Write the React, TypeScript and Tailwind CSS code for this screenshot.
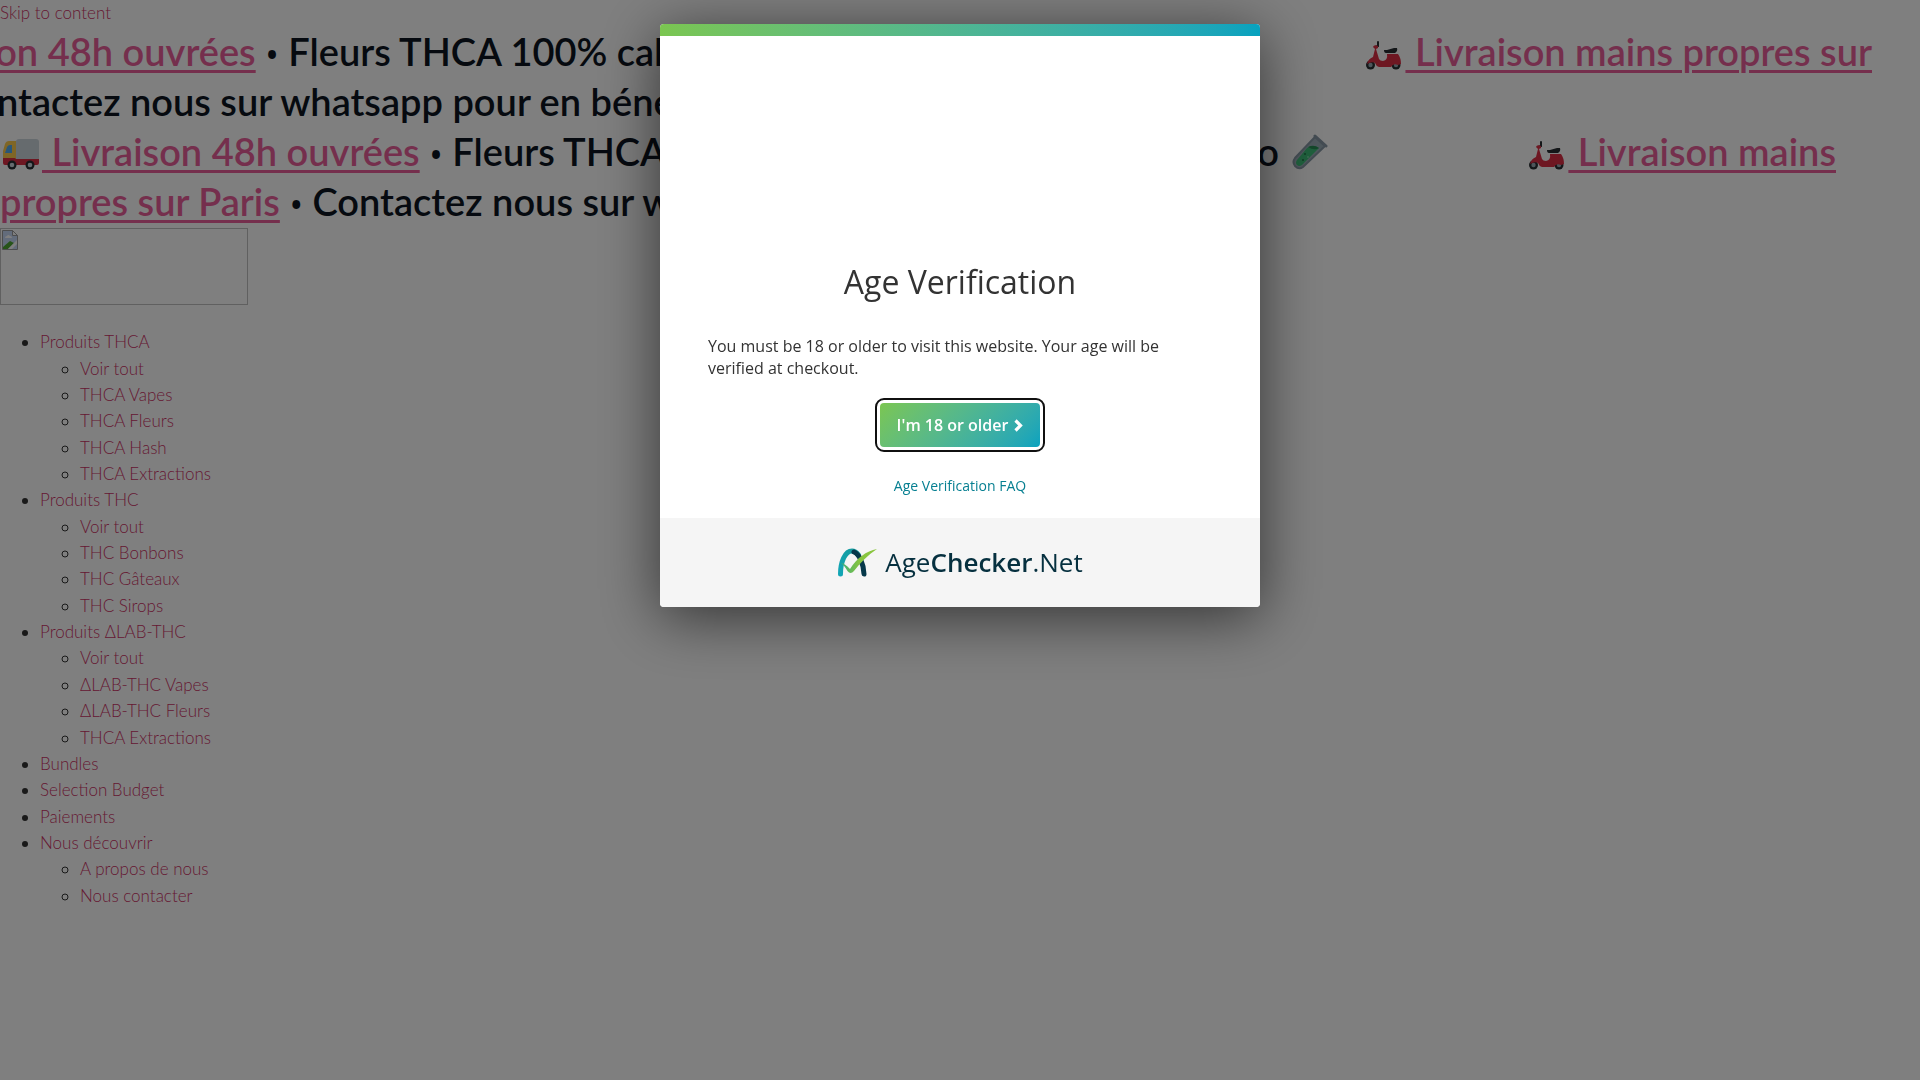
import React from 'react';

interface NavItem {
  label: string;
  children?: string[];
}

const navItems: NavItem[] = [
  {
    label: 'Produits THCA',
    children: ['Voir tout', 'THCA Vapes', 'THCA Fleurs', 'THCA Hash', 'THCA Extractions'],
  },
  {
    label: 'Produits THC',
    children: ['Voir tout', 'THC Bonbons', 'THC Gâteaux', 'THC Sirops'],
  },
  {
    label: 'Produits ΔLAB-THC',
    children: ['Voir tout', 'ΔLAB-THC Vapes', 'ΔLAB-THC Fleurs', 'THCA Extractions'],
  },
  { label: 'Bundles' },
  { label: 'Selection Budget' },
  { label: 'Paiements' },
  { label: 'Nous découvrir', children: ['A propos de nous', 'Nous contacter'] },
];

const Truck = () => (
  <svg className="inline-block align-[-4px]" width="42" height="36" viewBox="0 0 42 36">
    <path d="M16 8q0-3 3-3h17q3 0 3 3v18H16z" fill="#ccd6dd" />
    <path d="M3 27V17l2-7q1-3 4-3h7v20z" fill="#ffcc4d" />
    <path d="M5 19l2-6q1-2 3-2h2v8z" fill="#55acee" />
    <path d="M3 24h12l1 1h23v4q0 2-2 2H5q-2 0-2-2z" fill="#dd2e44" />
    <circle cx="12" cy="31" r="4.500" fill="#292f33" />
    <circle cx="12" cy="31" r="2.300" fill="#ccd6dd" />
    <circle cx="30" cy="31" r="4.500" fill="#292f33" />
    <circle cx="30" cy="31" r="2.300" fill="#ccd6dd" />
  </svg>
);

const Scooter = () => (
  <svg className="inline-block align-[-4px]" width="42" height="36" viewBox="0 0 42 36">
    <circle cx="7.500" cy="31" r="4.500" fill="#292f33" />
    <circle cx="7.500" cy="31" r="2.200" fill="#99aab5" />
    <circle cx="33" cy="31" r="4.500" fill="#292f33" />
    <circle cx="33" cy="31" r="2.200" fill="#99aab5" />
    <path d="M15 8v4l-3 1" fill="none" stroke="#292f33" strokeWidth="2" strokeLinecap="round" />
    <path d="M10 13q1-3 5-1v2l-2 1l3 10q1 2 4 2q5-1 4-7h11q3 4 3 10l-3 1q-5-2-7 2H16q-3-1-4-4q-3-2-8 1q1-5 6-7l2-8z" fill="#dd2e44" />
    <path d="M21 16h3l7-2h3q1 3-2 5h-9q-2 0-2-3z" fill="#292f33" />
  </svg>
);

const TestTube = () => (
  <svg className="inline-block align-[-4px]" width="42" height="36" viewBox="0 0 42 36">
    <path d="M27 3l10 9L15 33q-4 3-8-1q-3-4 0-8z" fill="#9fb0bb" stroke="#8899a6" strokeWidth="2" />
    <path d="M19 14q5-4 12 0L14 31q-3 2-5 0t0-5z" fill="#3fbf7a" />
    <path d="M20 13q6-3 11 1q-5 3-11-1z" fill="#2a8f57" />
    <path d="M27 2l11 10" stroke="#8899a6" strokeWidth="3" strokeLinecap="round" />
    <circle cx="17" cy="20" r="1" fill="#1f7a47" />
    <circle cx="15" cy="26" r="1" fill="#1f7a47" />
    <circle cx="20" cy="23" r="1" fill="#77d9a0" />
  </svg>
);

const BannerLink = ({ children }: { children: React.ReactNode }) => (
  <a href="#" className="text-[#ea5f9a] underline decoration-3 underline-offset-4">
    {children}
  </a>
);

const Dot = () => (
  <span className="px-0.5 font-['Open_Sans',sans-serif] text-[32px] leading-none"> • </span>
);

const Banner = () => (
  <div className="overflow-hidden whitespace-pre pb-0.5 text-[38px] font-semibold leading-[50px] text-[#0d1421]">
    <div className="-ml-41 flex justify-between pr-12">
      <span>
        <BannerLink><Truck /> Livraison 48h ouvrées</BannerLink><Dot />Fleurs THCA 100% cali
      </span>
      <BannerLink><Scooter /> Livraison mains propres sur</BannerLink>
    </div>
    <div className="-ml-41">
      <BannerLink>Paris</BannerLink><Dot />Contactez nous sur whatsapp pour en bénéficier
    </div>
    <div className="flex justify-between pr-21">
      <span>
        <BannerLink><Truck /> Livraison 48h ouvrées</BannerLink><Dot />Fleurs THCA
      </span>
      <span className="flex gap-49">
        <span>labo <TestTube /></span>
        <BannerLink><Scooter /> Livraison mains</BannerLink>
      </span>
    </div>
    <div>
      <BannerLink>propres sur Paris</BannerLink><Dot />Contactez nous sur whatsapp
    </div>
  </div>
);

// 壊れた画像のプレースホルダー
const BrokenLogo = () => (
  <div className="h-[77px] w-[248px] border border-[#c0c0c0] p-px">
    <svg width="16" height="20" viewBox="0 0 16 20">
      <path d="M0.5 0.5h10l5 5v14h-15z" fill="#c6d9f7" stroke="#9a9a9a" />
      <path d="M10.5 0.5v5h5z" fill="#fff" stroke="#9a9a9a" />
      <path d="M3 8q0-2 2-2q1-2 3 0q2 0 2 2z" fill="#fff" />
      <path d="M1 19v-2l7-6l4 2l-6 6z" fill="#4ea832" />
      <path d="M6 19l9-9v4l-5 5z" fill="#fff" />
    </svg>
  </div>
);

const Navigation = () => (
  <nav className="mt-6">
    <ul className="list-disc pl-10">
      {navItems.map((item) => (
        <li key={item.label}>
          <a href="#" className="text-[#cc3366]">{item.label}</a>
          {item.children && (
            <ul className="list-[circle] pl-10">
              {item.children.map((child) => (
                <li key={child}>
                  <a href="#" className="text-[#cc3366]">{child}</a>
                </li>
              ))}
            </ul>
          )}
        </li>
      ))}
    </ul>
  </nav>
);

const AgeCheckerLogo = () => (
  <svg width="40" height="29" viewBox="0 0 40 29">
    <defs>
      <linearGradient id="arch" x1="0" y1="1" x2="1" y2="0">
        <stop offset="0" stopColor="#12a5b5" />
        <stop offset="1" stopColor="#159a9c" />
      </linearGradient>
      <linearGradient id="tick" x1="0" y1="0" x2="1" y2="0">
        <stop offset="0" stopColor="#3fae7a" />
        <stop offset="0.5" stopColor="#86c440" />
        <stop offset="1" stopColor="#8cc63f" />
      </linearGradient>
    </defs>
    <path d="M3.5 26C3.5 14 8 3 15 3C18 3 20 5 21.500 7" fill="none" stroke="url(#arch)" strokeWidth="5" strokeLinecap="round" />
    <path d="M17 4C22 6 26.500 15 27 26" fill="none" stroke="#06384a" strokeWidth="5" strokeLinecap="round" />
    <path d="M4 15C7 15 10 18 13 21C20 10 29 3 40 1C31 7 23 15 17 23Q13.500 27 10.500 23Q7 17 4 15z" fill="url(#tick)" />
  </svg>
);

const AgeModal = () => (
  <div
    role="dialog"
    aria-labelledby="age-title"
    className="w-[600px] overflow-hidden rounded bg-white font-['Open_Sans',sans-serif] text-[#333] shadow-[0_10px_60px_rgba(0,0,0,0.6)]"
  >
    <div className="h-3 bg-linear-to-r from-[#7bc650] to-[#06a2bf]" />
    <div className="flex flex-col items-center px-12 pt-[222px] pb-[21px]">
      <h1 id="age-title" className="text-[32px] leading-12">Age Verification</h1>
      <p className="mt-[29px] w-full text-base leading-[22px]">
        You must be 18 or older to visit this website. Your age will be verified at checkout.
      </p>
      <button
        type="button"
        className="mt-6 flex h-11 w-40 items-center justify-center gap-1.5 rounded bg-linear-135 from-[#7bc650] to-[#06a2bf] text-base font-semibold text-white outline-2 outline-offset-3 outline-[#101010]"
      >
        I'm 18 or older
        <svg width="9" height="13" viewBox="0 0 9 13">
          <path d="M1.500 1.500L6.500 6.500L1.500 11.500" fill="none" stroke="#fff" strokeWidth="3.200" />
        </svg>
      </button>
      <a href="#" className="mt-7 text-sm leading-[22px] text-[#067f91]">Age Verification FAQ</a>
    </div>
    <div className="flex h-[89px] items-center justify-center gap-2 bg-[#f5f5f5] text-[26px] text-[#06303f]">
      <AgeCheckerLogo />
      <span>
        Age<span className="font-semibold">Checker</span>.Net
      </span>
    </div>
  </div>
);

const App = () => {
  return (
    <div className="min-h-screen bg-white font-['Lato',sans-serif] text-[17px] leading-[1.55] font-light text-[#333]">
      <a href="#" className="block text-[#cc3366]">Skip to content</a>
      <Banner />
      <BrokenLogo />
      <Navigation />
      <div className="fixed inset-0 flex items-start justify-center bg-black/50 pt-6 font-normal">
        <AgeModal />
      </div>
    </div>
  );
};

export default App;
